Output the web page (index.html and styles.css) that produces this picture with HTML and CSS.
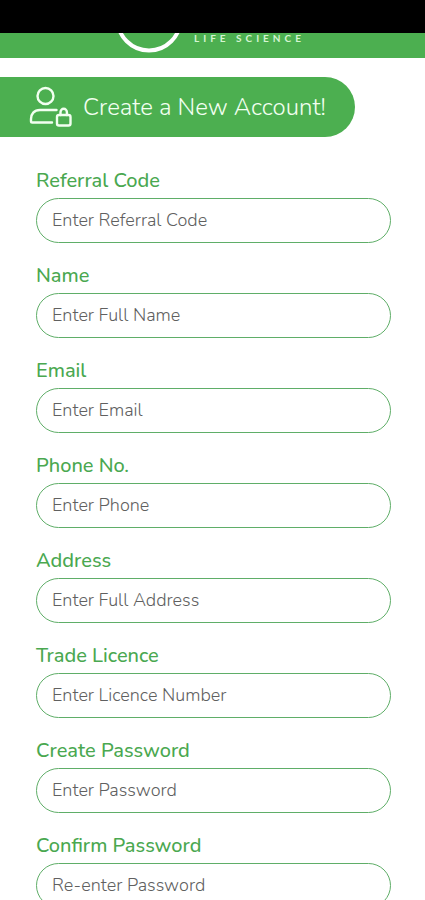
FILE: index.html
```html
<!DOCTYPE html>
<html lang="en">
<head>
<meta charset="utf-8">
<meta name="viewport" content="width=device-width, initial-scale=1">
<title>Create a New Account</title>
<link rel="stylesheet" href="styles.css">
</head>
<body>
<div class="status-bar"></div>
<header class="brand">
  <svg class="brand-mark" width="70" height="25" viewBox="0 0 70 25" aria-hidden="true">
    <circle cx="34" cy="-14" r="31.500" fill="none" stroke="#fff" stroke-width="4"/>
  </svg>
  <span class="brand-tagline">LIFE SCIENCE</span>
</header>
<main>
  <div class="banner">
    <svg class="banner-icon" width="44" height="44" viewBox="0 0 44 44" fill="none" stroke="#f2fff0" stroke-width="2.400" stroke-linecap="round" stroke-linejoin="round" aria-hidden="true">
      <circle cx="16.500" cy="11" r="8"/>
      <path d="M27.500 25H11C5 25 2 29 2 34v2.200c0 .8.500 1.300 1.300 1.300H23"/>
      <rect x="28" y="30" width="13.500" height="10.500" rx="2"/>
      <path d="M31.500 30v-3a3.200 3.200 0 0 1 6.400 0V30"/>
    </svg>
    <h1>Create a New Account!</h1>
  </div>
  <form class="signup">
    <div class="field"><label for="referral">Referral Code</label><input id="referral" type="text" placeholder="Enter Referral Code"></div>
    <div class="field"><label for="name">Name</label><input id="name" type="text" placeholder="Enter Full Name"></div>
    <div class="field"><label for="email">Email</label><input id="email" type="email" placeholder="Enter Email"></div>
    <div class="field"><label for="phone">Phone No.</label><input id="phone" type="tel" placeholder="Enter Phone"></div>
    <div class="field"><label for="address">Address</label><input id="address" type="text" placeholder="Enter Full Address"></div>
    <div class="field"><label for="licence">Trade Licence</label><input id="licence" type="text" placeholder="Enter Licence Number"></div>
    <div class="field"><label for="password">Create Password</label><input id="password" type="password" placeholder="Enter Password"></div>
    <div class="field"><label for="confirm">Confirm Password</label><input id="confirm" type="password" placeholder="Re-enter Password"></div>
  </form>
</main>
</body>
</html>
```
FILE: styles.css
```css
* { box-sizing: border-box; }

html { scrollbar-width: none; }

body {
  margin: 0;
  background: #fff;
  font-family: Nunito, Lato, "Open Sans", sans-serif;
}

.status-bar {
  height: 33px;
  background: #000;
}

.brand {
  display: flex;
  justify-content: center;
  gap: 9px;
  height: 25px;
  padding-right: 5px;
  background: #4caf50;
}

.brand-mark { flex: none; }

.brand-tagline {
  color: #d5f5d2;
  font-family: Lato, sans-serif;
  font-size: 10px;
  font-weight: 700;
  line-height: 10px;
  letter-spacing: 4px;
  white-space: nowrap;
}

.banner {
  display: flex;
  align-items: center;
  gap: 10px;
  width: fit-content;
  height: 60px;
  margin-top: 19px;
  padding: 0 29px;
  border-radius: 0 30px 30px 0;
  background: #4caf50;
}

.banner-icon { flex: none; }

h1 {
  margin: 0;
  color: #f2fff0;
  font-size: 24px;
  font-weight: 300;
  line-height: 32px;
}

.signup {
  display: flex;
  flex-direction: column;
  gap: 20px;
  padding: 31px 34px 30px 36px;
}

.field {
  display: flex;
  flex-direction: column;
  gap: 5px;
}

label {
  color: #4aa850;
  font-size: 20px;
  font-weight: 500;
  line-height: 25px;
}

input {
  width: 100%;
  height: 45px;
  padding: 0 15px 2px;
  border: 1px solid #5fae68;
  border-radius: 23px;
  background: #fff;
  color: #333;
  font: inherit;
  font-size: 18px;
  font-weight: 300;
}

input::placeholder {
  color: #606060;
  opacity: 1;
}
```
